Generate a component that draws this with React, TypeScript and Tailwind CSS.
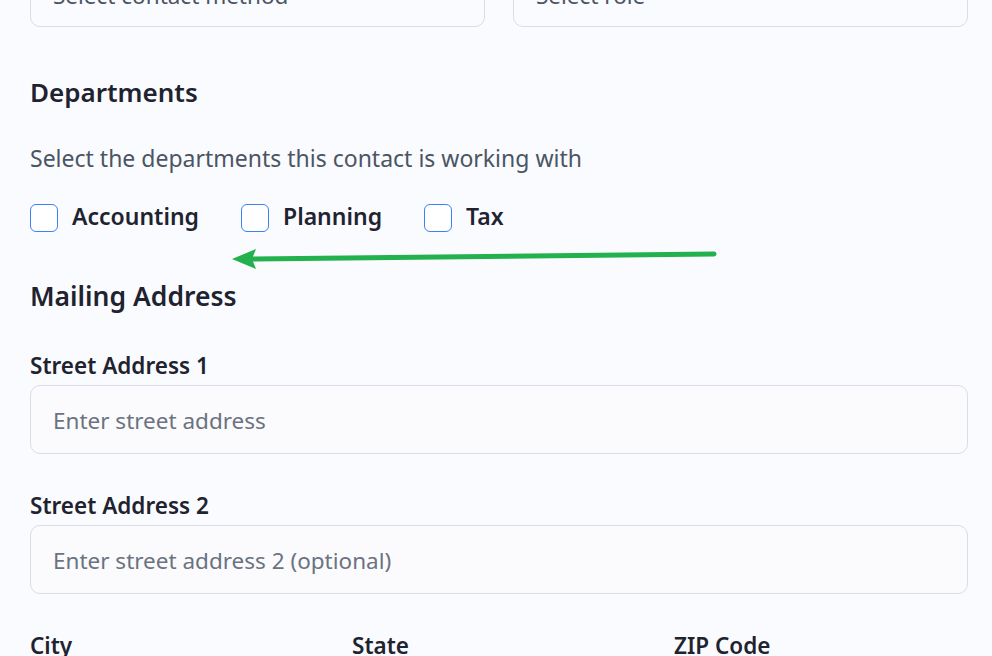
import React from "react";

const DEPARTMENTS = ["Accounting", "Planning", "Tax"];

function Field({ label, placeholder }: { label: string; placeholder: string }) {
  return (
    <div>
      <label className="block text-[22.5px] leading-[28px] font-semibold text-[#1f2330] mb-[5px]">
        {label}
      </label>
      <div className="h-[69px] rounded-[10px] border border-[#d9dde6] bg-[#fbfbfe] px-[22px] pt-[2px] flex items-center text-[22.5px] text-[#6b7280]">
        {placeholder}
      </div>
    </div>
  );
}

export default function App() {
  return (
    <div
      className="relative h-[656px] overflow-hidden bg-[#fafbfe] pl-[30px] pr-[24px] text-[#1f2330]"
      style={{ fontFamily: '"Noto Sans", "Open Sans", sans-serif' }}
    >
      {/* contact method / role selects, scrolled past */}
      <div className="-mt-[42px] grid grid-cols-2 gap-[28px]">
        <div className="h-[69px] rounded-[10px] border border-[#d9dde6] px-[22px] pt-[6px] flex items-center text-[22.5px] text-[#4b5563]">
          Select contact method
        </div>
        <div className="h-[69px] rounded-[10px] border border-[#d9dde6] px-[22px] pt-[6px] flex items-center text-[22.5px] text-[#4b5563]">
          Select role
        </div>
      </div>

      {/* Departments */}
      <h2 className="mt-[47px] text-[26px] leading-[36px] font-semibold">Departments</h2>
      <p className="mt-[34px] text-[23px] leading-[28px] text-[#4b5563]">
        Select the departments this contact is working with
      </p>
      <div className="mt-[32px] flex items-start gap-[42px]">
        {DEPARTMENTS.map((d) => (
          <label key={d} className="flex items-start gap-[14px]">
            <span className="w-[28px] h-[28px] rounded-[6px] border border-[#3b82f6] bg-white" />
            <span className="block h-[28px] text-[23px] leading-[24px] font-semibold">{d}</span>
          </label>
        ))}
      </div>

      {/* Mailing Address */}
      <h2 className="mt-[46px] text-[26.5px] leading-[36px] font-semibold">Mailing Address</h2>
      <div className="mt-[38px] flex flex-col gap-[38px]">
        <Field label="Street Address 1" placeholder="Enter street address" />
        <Field label="Street Address 2" placeholder="Enter street address 2 (optional)" />
        <div className="grid grid-cols-3 gap-[28px]">
          <label className="block text-[22.5px] leading-[28px] font-semibold">City</label>
          <label className="block text-[22.5px] leading-[28px] font-semibold">State</label>
          <label className="block text-[22.5px] leading-[28px] font-semibold">ZIP Code</label>
        </div>
      </div>

      {/* annotation arrow */}
      <svg className="absolute left-0 top-0 pointer-events-none" width="992" height="656">
        <line x1="714" y1="254" x2="250" y2="259" stroke="#22b14c" strokeWidth="5" strokeLinecap="round" />
        <polygon points="232,259 256,249 252,259 256,269" fill="#22b14c" />
      </svg>
    </div>
  );
}
